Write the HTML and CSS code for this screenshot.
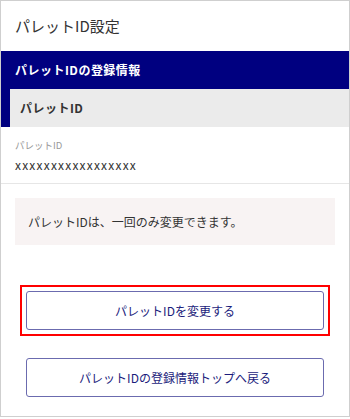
FILE: index.html
```html
<!DOCTYPE html>
<html lang="ja">
<head>
<meta charset="utf-8">
<title>パレットID設定</title>
<link rel="stylesheet" href="styles.css">
</head>
<body>
<div class="frame">
  <h1 class="title">パレットID設定</h1>
  <section class="info">
    <h2 class="info-head">パレットIDの登録情報</h2>
    <div class="info-sub">パレットID</div>
  </section>
  <div class="field">
    <div class="field-label">パレットID</div>
    <div class="field-value">xxxxxxxxxxxxxxxxx</div>
  </div>
  <div class="notice">パレットIDは、一回のみ変更できます。</div>
  <div class="actions">
    <div class="highlight">
      <a class="btn" href="#">パレットIDを変更する</a>
    </div>
    <a class="btn btn-back" href="#">パレットIDの登録情報トップへ戻る</a>
  </div>
</div>
</body>
</html>
```

FILE: styles.css
```css
html, body {
  margin: 0;
  padding: 0;
  background: #fff;
}
body {
  font-family: "Noto Sans CJK JP", "Noto Sans", sans-serif;
  color: #333;
}
.frame {
  width: 350px;
  height: 417px;
  box-sizing: border-box;
  border: 1px solid #cfcfcf;
  background: #fff;
}
.title {
  margin: 0;
  height: 50px;
  line-height: 50px;
  padding-left: 14px;
  font-size: 15px;
  font-weight: normal;
  color: #333;
}
.info {
  background: #000080;
}
.info-head {
  margin: 0;
  height: 38px;
  line-height: 38px;
  padding-left: 14px;
  font-size: 12px;
  font-weight: bold;
  color: #fff;
  letter-spacing: 0.04em;
}
.info-sub {
  margin-left: 9px;
  height: 38px;
  line-height: 38px;
  padding-left: 10px;
  background: #ebebeb;
  font-size: 12px;
  font-weight: bold;
  color: #333;
  letter-spacing: 0.04em;
}
.field {
  padding: 11px 14px 9px;
  border-bottom: 1px solid #e6e6e6;
}
.field-label {
  font-size: 9.5px;
  line-height: 14px;
  color: #999;
}
.field-value {
  margin-top: 4px;
  font-size: 12px;
  line-height: 18px;
  letter-spacing: 1.2px;
  color: #333;
}
.notice {
  margin: 14px 14px 0;
  height: 47px;
  line-height: 47px;
  padding-left: 13px;
  background: #f8f3f3;
  font-size: 12px;
  color: #333;
}
.actions {
  display: flex;
  flex-direction: column;
}
.highlight {
  margin: 40px 0 0 19px;
  width: 310px;
  box-sizing: border-box;
  border: 2px solid #ff0000;
  padding: 4px;
}
.btn {
  display: flex;
  align-items: center;
  justify-content: center;
  height: 39px;
  box-sizing: border-box;
  border: 1px solid #6b6baf;
  border-radius: 3px;
  background: #fff;
  color: #1c1c7c;
  font-size: 12px;
  text-decoration: none;
  letter-spacing: 0;
}
.btn-back {
  margin: 22px 0 0 25px;
  width: 298px;
}
```
